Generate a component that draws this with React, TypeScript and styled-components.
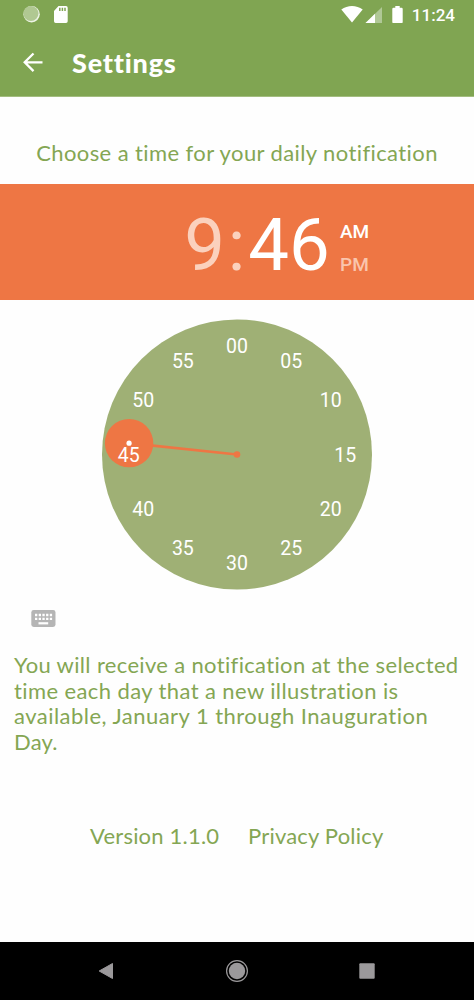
import React from "react";
import styled, { createGlobalStyle } from "styled-components";

const GlobalStyle = createGlobalStyle`
  body { margin: 0; background: #fff; }
  * { box-sizing: border-box; }
`;

const Screen = styled.div`
  width: 474px;
  height: 1000px;
  display: flex;
  flex-direction: column;
  overflow: hidden;
  background: #fefefe;
  color: #84a653;
  font-family: Lato, sans-serif;
`;

const Header = styled.header`
  height: 97px;
  flex: none;
  background: #80a552;
  border-bottom: 1px solid #a3bd80;
  color: #fff;
`;

const StatusBar = styled.div`
  height: 30px;
  display: flex;
  align-items: center;
  justify-content: space-between;
  padding: 0 19px 0 22px;
  font: 500 17px/30px Roboto, sans-serif;
`;

const StatusGroup = styled.div`
  display: flex;
  align-items: center;
  height: 30px;
`;

const Clock = styled.span`
  margin-left: 7px;
`;

const TitleBar = styled.div`
  height: 66px;
  display: flex;
  align-items: center;
  padding-left: 19px;
`;

const Title = styled.h1`
  margin: 0 0 0 25px;
  font-size: 27px;
  line-height: 32px;
  font-weight: 900;
  letter-spacing: 0.8px;
`;

const Prompt = styled.div`
  height: 87px;
  flex: none;
  padding-top: 42px;
  text-align: center;
  font-size: 22px;
  line-height: 28px;
  white-space: nowrap;
  letter-spacing: 0.4px;
`;

const TimeBanner = styled.div`
  height: 116px;
  flex: none;
  display: flex;
  align-items: center;
  padding: 7px 0 0 184px;
  background: #ee7644;
  color: #fff;
  font-family: Roboto, sans-serif;
`;

const Digits = styled.span<{ $dim?: boolean; $width: number }>`
  width: ${(p) => p.$width}px;
  flex: none;
  text-align: center;
  font-size: 72.5px;
  line-height: 84px;
  color: ${(p) => (p.$dim ? "#fbd1bd" : "#fff")};
`;

const Meridiem = styled.div`
  margin-left: 10px;
  padding-top: 4px;
  display: flex;
  flex-direction: column;
`;

const Period = styled.span<{ $dim?: boolean }>`
  font-size: 19px;
  line-height: 33px;
  font-weight: 500;
  color: ${(p) => (p.$dim ? "#fac5ad" : "#fff")};
`;

const DialArea = styled.div`
  height: 309px;
  flex: none;
  display: flex;
  justify-content: center;
  padding-top: 19px;
  text {
    font: 19.5px Roboto, sans-serif;
    fill: #fff;
    text-anchor: middle;
  }
`;

const KeyboardRow = styled.div`
  height: 19px;
  flex: none;
  padding-left: 31px;
  line-height: 0;
`;

const Message = styled.p`
  margin: 24px 0 0;
  padding-left: 14px;
  height: 103px;
  flex: none;
  font-size: 22px;
  line-height: 25.6px;
`;

const Line = styled.span<{ $spacing: number }>`
  display: block;
  white-space: nowrap;
  letter-spacing: ${(p) => p.$spacing}px;
`;

const Footer = styled.footer`
  flex: 1;
  display: flex;
  padding: 67px 0 0 90px;
  font-size: 22px;
  line-height: 28px;
  white-space: nowrap;
`;

const FooterItem = styled.span<{ $width?: number; $spacing: number }>`
  width: ${(p) => (p.$width ? `${p.$width}px` : "auto")};
  letter-spacing: ${(p) => p.$spacing}px;
`;

const NavBar = styled.nav`
  height: 58px;
  flex: none;
  display: flex;
  justify-content: space-between;
  align-items: center;
  padding: 0 99px 0 98px;
  background: #000;
`;

const minutes = ["00", "05", "10", "15", "20", "25", "30", "35", "40", "45", "50", "55"];

function Dial() {
  const hand = (46 * 6 * Math.PI) / 180;
  const hx = 135 + 108.5 * Math.sin(hand);
  const hy = 135.5 - 108.5 * Math.cos(hand);
  return (
    <svg width="270" height="271" viewBox="0 0 270 271">
      <circle cx="135" cy="135.5" r="135" fill="#9fb075" />
      <line x1="135" y1="135.5" x2={hx} y2={hy} stroke="#ee7644" strokeWidth="2.6" />
      <circle cx="135" cy="135.5" r="3.3" fill="#ee7644" />
      <circle cx={hx} cy={hy} r="24.2" fill="#ee7644" />
      <circle cx={hx} cy={hy} r="2.6" fill="#fff" />
      {minutes.map((m, i) => (
        <text
          key={m}
          x={135 + 108.3 * Math.sin((i * Math.PI) / 6)}
          y={142.6 - 108.3 * Math.cos((i * Math.PI) / 6)}
        >
          {m}
        </text>
      ))}
    </svg>
  );
}

export default function App() {
  return (
    <Screen>
      <GlobalStyle />
      <Header>
        <StatusBar>
          <StatusGroup>
            <svg width="50" height="20" viewBox="0 0 50 20">
              <circle cx="9.6" cy="9.2" r="8.2" fill="#edf3e6" />
              <circle cx="8.9" cy="8.5" r="7.6" fill="#b0c892" />
              <path d="M36.5 1H44a1.7 1.7 0 0 1 1.7 1.7v13.6A1.7 1.7 0 0 1 44 18H33.7a1.7 1.7 0 0 1-1.7-1.7V6z" fill="#fff" />
              <path d="M37.8 2.7v3.2M40.4 2.7v3.2M43 2.7v3.2" stroke="#80a552" strokeWidth="1.5" />
            </svg>
          </StatusGroup>
          <StatusGroup>
            <svg width="64" height="20" viewBox="0 0 64 20">
              <path d="M.3 4.5C6.5-.3 15.500-.3 21.700 4.500L11 17.500z" fill="#fff" />
              <path d="M41 2v16H24.500z" fill="#b0c896" />
              <path d="M34 8.800V18h-9.500z" fill="#fff" />
              <path d="M54.300 1h4.400v1.700h1.800a1.200 1.200 0 0 1 1.200 1.200v13a1.200 1.200 0 0 1-1.200 1.200h-8a1.200 1.200 0 0 1-1.200-1.200v-13a1.200 1.200 0 0 1 1.200-1.200h1.800z" fill="#fff" />
            </svg>
            <Clock>11:24</Clock>
          </StatusGroup>
        </StatusBar>
        <TitleBar>
          <svg width="28" height="28" viewBox="0 0 28 28">
            <path d="M23.5 13.3H6M14.5 4.5L5.7 13.3L14.5 22.1" fill="none" stroke="#fff" strokeWidth="2.3" />
          </svg>
          <Title>Settings</Title>
        </TitleBar>
      </Header>
      <Prompt>Choose a time for your daily notification</Prompt>
      <TimeBanner>
        <Digits $dim $width={41}>9</Digits>
        <Digits $dim $width={23}>:</Digits>
        <Digits $width={82}>46</Digits>
        <Meridiem>
          <Period>AM</Period>
          <Period $dim>PM</Period>
        </Meridiem>
      </TimeBanner>
      <DialArea>
        <Dial />
      </DialArea>
      <KeyboardRow>
        <svg width="25" height="19" viewBox="0 0 25 19">
          <rect x="0.3" y="1" width="24.2" height="17" rx="2.4" fill="#b5b5b5" />
          <path d="M4 6h17.5M4 9.8h17.5" stroke="#fff" strokeWidth="2.3" strokeDasharray="2.3 1.4" />
          <path d="M7.5 14.3h9.7" stroke="#fff" strokeWidth="2.2" />
        </svg>
      </KeyboardRow>
      <Message>
        <Line $spacing={0.34}>You will receive a notification at the selected</Line>
        <Line $spacing={0.4}>time each day that a new illustration is</Line>
        <Line $spacing={0.47}>available, January 1 through Inauguration</Line>
        <Line $spacing={0.2}>Day.</Line>
      </Message>
      <Footer>
        <FooterItem $width={158} $spacing={0.2}>Version 1.1.0</FooterItem>
        <FooterItem $spacing={0.2}>Privacy Policy</FooterItem>
      </Footer>
      <NavBar>
        <svg width="16" height="18" viewBox="0 0 16 18">
          <path d="M14.5 1.5v15L1.2 9z" fill="#9b999b" stroke="#9b999b" strokeWidth="1" strokeLinejoin="round" />
        </svg>
        <svg width="24" height="24" viewBox="0 0 24 24">
          <circle cx="12" cy="12" r="10.4" fill="none" stroke="#9b999b" strokeWidth="1.2" />
          <circle cx="12" cy="12" r="8.2" fill="#9b999b" />
        </svg>
        <svg width="16" height="16" viewBox="0 0 16 16">
          <rect x="0.3" y="0.3" width="15.4" height="15.4" rx="1" fill="#9b999b" />
        </svg>
      </NavBar>
    </Screen>
  );
}
